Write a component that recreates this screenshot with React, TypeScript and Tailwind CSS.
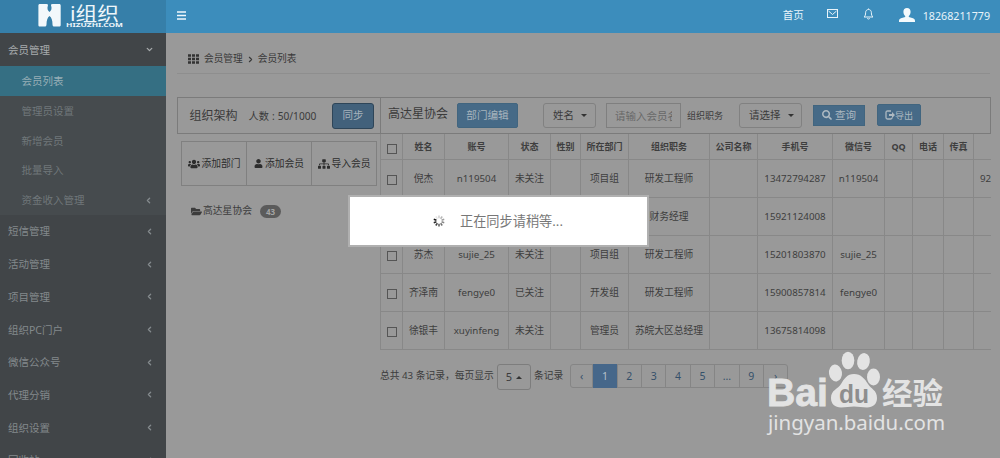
import { ChevronDown, ChevronLeft, ChevronRight } from "lucide-react"
import { FaSitemap, FaUser, FaUsers, FaFolderOpen, FaSearch } from "react-icons/fa"
import { clsx } from "clsx"

const subMenu = [
  { label: "会员列表", active: true },
  { label: "管理员设置" },
  { label: "新增会员" },
  { label: "批量导入" },
  { label: "资金收入管理", more: true },
]

const menu = ["短信管理", "活动管理", "项目管理", "组织PC门户", "微信公众号", "代理分销", "组织设置", "回收站"]

const columns = [
  { title: "", width: 22 },
  { title: "姓名", width: 42 },
  { title: "账号", width: 64 },
  { title: "状态", width: 42 },
  { title: "性别", width: 30 },
  { title: "所在部门", width: 48 },
  { title: "组织职务", width: 81 },
  { title: "公司名称", width: 48 },
  { title: "手机号", width: 75 },
  { title: "微信号", width: 52 },
  { title: "QQ", width: 28 },
  { title: "电话", width: 31 },
  { title: "传真", width: 30 },
  { title: "", width: 80 },
]

const members = [
  ["倪杰", "n119504", "未关注", "", "项目组", "研发工程师", "", "13472794287", "n119504", "", "", "", "92"],
  ["", "", "", "", "", "财务经理", "", "15921124008", "", "", "", "", ""],
  ["苏杰", "sujie_25", "未关注", "", "项目组", "研发工程师", "", "15201803870", "sujie_25", "", "", "", ""],
  ["齐泽南", "fengye0", "已关注", "", "开发组", "研发工程师", "", "15900857814", "fengye0", "", "", "", ""],
  ["徐银丰", "xuyinfeng", "未关注", "", "管理员", "苏皖大区总经理", "", "13675814098", "", "", "", "", ""],
]

const pages = ["‹", "1", "2", "3", "4", "5", "...", "9", "›"]

function Logo() {
  return (
    <svg width="166" height="33" viewBox="0 0 166 33" className="block">
      <path
        d="M40 4H46.500C48 4 48.300 4.800 47.800 6C47 8.500 47.600 10.500 49.500 12C51.400 10.500 52 8.500 51.200 6C50.700 4.800 51 4 52.500 4H59C60.300 4 60.700 4.600 60.700 5.500V25C60.700 26 60 26.600 59 26.600H54.500C53 26.600 52.500 25.800 52.500 24.500C52.500 20 51.500 17.500 49.500 16C47.500 17.500 46.500 20 46.500 24.500C46.500 25.800 46 26.600 44.500 26.600H40C38.900 26.600 38.400 26 38.400 25V5.500C38.400 4.500 39 4 40 4Z"
        fill="#f3f8fb"
      />
      <g fill="#eef6fa">
        <text x="70" y="20.500" fontSize="19" textLength="49" lengthAdjust="spacingAndGlyphs">i组织</text>
        <text x="66" y="27.200" fontSize="5" fontWeight="700" textLength="57" lengthAdjust="spacingAndGlyphs">HIZUZHI.COM</text>
      </g>
    </svg>
  )
}

function TopBar() {
  return (
    <header className="flex h-[33px] shrink-0 bg-[#3c8dbc] text-[#e8f4fa]">
      <div className="w-[166px] shrink-0 bg-[#367fa9]">
        <Logo />
      </div>
      <svg width="9" height="9" viewBox="0 0 9 9" className="mt-[11px] ml-[11px]">
        <path d="M0 1h9M0 4.500h9M0 8h9" stroke="#f0f8fc" strokeWidth="1.700" />
      </svg>
      <div className="ml-auto flex h-[31px] items-center pr-[10px] text-[10.500px]">
        <span className="mr-[22px] pt-px">首页</span>
        <svg width="12" height="10" viewBox="0 0 12 10" className="mr-[25px] mb-[4px]" fill="none" stroke="currentColor">
          <rect x="1.500" y=".5" width="10" height="8" />
          <path d="M2.500 2l4 3.500 4-3.500" />
        </svg>
        <svg width="11" height="12" viewBox="0 0 11 12" className="mr-[25px] mb-[4px]" fill="none" stroke="currentColor">
          <path d="M5.500.5v1M1 9c1.300-1 1.600-2.500 1.600-4.300 0-2 1.200-3.200 2.900-3.200s2.900 1.200 2.900 3.200C8.400 6.500 8.700 8 10 9z" />
          <path d="M4.300 10.200c.2 1.100 2.200 1.100 2.400 0" />
        </svg>
        <svg width="16" height="14" viewBox="0 0 16 14" className="mr-[8px] mb-[2px]" fill="#f4fafc">
          <path d="M8 0C5.700 0 4.400 1.500 4.400 3.700c0 1.700.7 3.300 1.800 4.200v1L2 10.300C.7 10.800 0 11.600 0 13v1h16v-1c0-1.400-.7-2.200-2-2.700L9.800 8.900v-1c1.100-.9 1.800-2.500 1.800-4.200C11.600 1.500 10.300 0 8 0z" />
        </svg>
        <span className="pt-px text-[10.700px]">18268211779</span>
      </div>
    </header>
  )
}

function Sidebar() {
  return (
    <aside className="flex w-[166px] shrink-0 flex-col overflow-hidden bg-[#414548] text-[10.500px] text-[#83898c]">
      <div className="flex h-[33px] shrink-0 items-center justify-between pt-[2px] pr-3 pl-2 text-[#a7abad]">
        会员管理
        <ChevronDown size={9} strokeWidth={3.5} className="mb-[2px]" />
      </div>
      {subMenu.map((item) => (
        <div
          key={item.label}
          className={clsx(
            "flex h-[29.800px] shrink-0 items-center justify-between pt-[2px] pr-[13px] pl-[21.500px]",
            item.active ? "bg-[#356f83] text-[#97aeb6]" : "bg-[#464b4e] text-[#70777a]"
          )}
        >
          {item.label}
          {item.more && <ChevronLeft size={9} strokeWidth={3.500} className="mb-[2px] text-[#858b8e]" />}
        </div>
      ))}
      {menu.map((label) => (
        <div key={label} className="flex h-[32.700px] shrink-0 items-center justify-between pt-[2px] pr-3 pl-2">
          {label}
          <ChevronLeft size={9} strokeWidth={3.500} className="mb-[2px] text-[#858b8e]" />
        </div>
      ))}
    </aside>
  )
}

function Caret({ up }: { up?: boolean }) {
  return (
    <svg width="6" height="3" viewBox="0 0 6 3" fill="#333">
      <path d={up ? "M0 3h6L3 0z" : "M0 0h6L3 3z"} />
    </svg>
  )
}

function Toolbar() {
  return (
    <div className="flex h-[37.500px] w-[814px] border border-[#7b7b7b] text-[#3b3b3b]">
      <div className="flex w-[203px] items-center border-r border-[#7b7b7b] pl-[11.500px]">
        <span className="pt-[2px] text-[12px]">组织架构</span>
        <span className="ml-[11px] pt-[2px] text-[10.200px]">
          人数<span className="mx-[3px]">:</span>50/1000
        </span>
        <button className="mt-px ml-auto mr-[6px] h-[26px] w-[42px] rounded-[3px] border border-[#2e4558] bg-[#42617b] pt-px text-[10.500px] text-[#a6b2bc]">
          同步
        </button>
      </div>
      <div className="flex flex-1 items-center pl-[7px] whitespace-nowrap">
        <span className="mb-[2px] text-[12px]">高达星协会</span>
        <button className="ml-[9px] h-[25px] w-[61px] rounded-[2px] border border-[#41657f] bg-[#466a87] pt-px text-[10.600px] text-[#a7b4bd]">
          部门编辑
        </button>
        <div className="ml-[25px] flex h-[25px] w-[53px] items-center gap-[7px] rounded-[3px] border border-[#818181] pt-px pl-[9px] text-[10.500px]">
          姓名 <Caret />
        </div>
        <div className="ml-[10px] h-[25px] w-[75px] border border-[#7f7f7f] px-[8px]">
          <div className="overflow-hidden text-[10.500px] leading-[25px] text-[#686868]">请输入会员名</div>
        </div>
        <span className="ml-[6px] pt-px text-[9px]">组织职务</span>
        <div className="ml-[16px] flex h-[25px] w-[63px] items-center gap-[7px] rounded-[3px] border border-[#818181] pt-px pl-[9px] text-[10.500px]">
          请选择 <Caret />
        </div>
        <button className="ml-[11px] flex h-[21px] w-[52px] items-center justify-center gap-[3px] border border-[#41657f] bg-[#466a87] text-[10.500px] text-[#adb9c1]">
          <FaSearch size={10} />
          <span className="pt-[2px]">查询</span>
        </button>
        <button className="ml-[12px] flex h-[22px] w-[44px] items-center justify-center rounded-[2px] border border-[#41657f] bg-[#466a87] text-[9px] text-[#adb9c1]">
          <svg width="10" height="10" viewBox="0 0 10 10" fill="none" stroke="currentColor" strokeWidth="1.300">
            <path d="M6 1H2.500C1.500 1 1 1.500 1 2.500v5C1 8.500 1.500 9 2.500 9h3C6.500 9 7 8.500 7 7.500" />
            <path d="M4 4h3V2l3 3-3 3V6H4z" fill="currentColor" stroke="none" />
          </svg>
          导出
        </button>
      </div>
    </div>
  )
}

function OrgPanel() {
  const actions = [
    { icon: FaUsers, label: "添加部门" },
    { icon: FaUser, label: "添加会员" },
    { icon: FaSitemap, label: "导入会员" },
  ]
  return (
    <div className="w-[203px] shrink-0 pt-[7px] pl-1">
      <div className="flex h-[45px] w-[196px] border border-[#808080]">
        {actions.map(({ icon: Icon, label }, i) => (
          <div
            key={label}
            className={clsx(
              "flex flex-1 items-center justify-center gap-[2px] text-[9.750px] text-[#2d2d2d]",
              i > 0 && "border-l border-[#808080]"
            )}
          >
            <Icon size={i === 1 ? 9 : 12} />
            <span className="pt-px">{label}</span>
          </div>
        ))}
      </div>
      <div className="mt-[18px] flex items-center pl-[10px] text-[9.800px] text-[#3c3c3c]">
        <FaFolderOpen size={11} className="mr-px" />
        高达星协会
        <span className="ml-2 h-[13px] w-[21px] rounded-full bg-[#5b5b5b] text-center text-[8px] leading-[13px] font-bold text-[#a5a5a5]">43</span>
      </div>
    </div>
  )
}

function Checkbox() {
  return <span className="mt-[3px] inline-block size-[10px] border border-[#555] align-middle" />
}

function MemberTable() {
  return (
    <div className="w-[610.500px] overflow-hidden">
      <table className="w-[673px] table-fixed border-collapse text-center text-[9.750px] whitespace-nowrap text-[#3e3e3e]">
        <colgroup>
          {columns.map((col, i) => (
            <col key={i} style={{ width: col.width }} />
          ))}
        </colgroup>
        <thead>
          <tr className="h-[25.500px]">
            {columns.map((col, i) => (
              <th key={i} className="border border-t-0 border-[#888] p-0 text-[9px] font-bold">
                {i === 0 ? <Checkbox /> : col.title}
              </th>
            ))}
          </tr>
        </thead>
        <tbody>
          {members.map((row, i) => (
            <tr key={i} className="h-[38px]">
              <td className="border border-[#888] p-0">
                <Checkbox />
              </td>
              {row.map((cell, j) => (
                <td key={j} className={clsx("border border-[#888] p-0 pt-[2px]", j === 12 && "pl-[6px] text-left")}>
                  {cell}
                </td>
              ))}
            </tr>
          ))}
        </tbody>
      </table>
    </div>
  )
}

function Pagination() {
  return (
    <div className="mt-[14px] ml-[203px] flex items-start text-[9.750px] text-[#3c3c3c]">
      <span className="w-[117px] pt-[5px] whitespace-nowrap">总共 43 条记录，每页显示</span>
      <div className="flex h-[26px] w-[34px] items-center justify-center gap-[4px] rounded-[3px] border border-[#7d7d7d] text-[11px]">
        5 <Caret up />
      </div>
      <span className="ml-[3px] pt-[5px]">条记录</span>
      <div className="ml-[7px] flex h-[24px] rounded-[3px] border border-[#858585] text-[10.500px] text-[#35506a]">
        {pages.map((page, i) => (
          <span
            key={page}
            className={clsx(
              "-my-px flex items-center justify-center pt-px",
              i === 0 ? "w-[21px]" : "w-[24.400px] border-l border-[#858585]",
              page === "1" && "bg-[#46678a] text-[#b5c0ca]"
            )}
          >
            {page}
          </span>
        ))}
      </div>
    </div>
  )
}

function Spinner() {
  const spokes = [0, 1, 2, 3, 4, 5, 6, 7, 8, 9]
  return (
    <svg width="12" height="12" viewBox="0 0 12 12">
      {spokes.map((n) => (
        <path
          key={n}
          d="M6 .5v2.800"
          stroke="#111"
          strokeWidth="1.500"
          opacity={1 - n * 0.1}
          transform={`rotate(${288 - n * 36} 6 6)`}
        />
      ))}
    </svg>
  )
}

function SyncDialog() {
  return (
    <div className="absolute top-[195px] left-[348px] flex h-[52px] w-[301px] items-center border-2 border-[#b0b0b0] bg-white pl-[83px] text-[13.200px] text-[#777]">
      <Spinner />
      <span className="ml-[15px] pt-[2px]">正在同步请稍等...</span>
    </div>
  )
}

function Watermark() {
  return (
    <svg width="190" height="90" viewBox="0 0 190 90" className="absolute top-[348px] left-[764px]">
      <g fill="#e3e3e3">
        <text x="3" y="58" fontSize="39" fontWeight="700" fontFamily="Liberation Sans" stroke="#e3e3e3" strokeWidth=".8" textLength="61" lengthAdjust="spacingAndGlyphs">Bai</text>
        <ellipse cx="71.500" cy="25" rx="6.500" ry="8.500" transform="rotate(-8 71.500 25)" />
        <ellipse cx="84" cy="12.500" rx="6.300" ry="8.800" />
        <ellipse cx="99.500" cy="13.500" rx="6.300" ry="8.500" transform="rotate(10 99.500 13.500)" />
        <ellipse cx="109.500" cy="29" rx="6.500" ry="8.500" />
        <path d="M90 26c7 0 11 5 14 10 3 5 9 6 9 14 0 6-4 9.500-10 9.500-5 0-8-1-13-1s-8 1-13 1c-6 0-10-3.500-10-9.500 0-8 7-9 10-14 3-5 6-10 13-10z" />
        <text x="118" y="55.500" fontSize="30" fontWeight="700" textLength="61" lengthAdjust="spacingAndGlyphs">经验</text>
        <text x="4" y="82" fontSize="20.500" textLength="177" lengthAdjust="spacingAndGlyphs">jingyan.baidu.com</text>
      </g>
      <text x="75" y="55" fontSize="26" fontWeight="700" fill="#8e8e8e" fontFamily="Liberation Sans" textLength="30" lengthAdjust="spacingAndGlyphs">du</text>
    </svg>
  )
}

export default function App() {
  return (
    <div className="relative flex h-[458px] w-[1000px] flex-col overflow-hidden bg-[#999] font-['Noto_Sans','Noto_Sans_CJK_SC',sans-serif]">
      <TopBar />
      <div className="flex min-h-0 flex-1">
        <Sidebar />
        <main className="min-w-0 flex-1 pl-[11px]">
          <div className="flex h-[41px] w-[813px] items-center border-b border-[#8e8e8e] pt-[12px] pl-[11px] text-[9.700px] text-[#383838]">
            <svg width="11" height="10" viewBox="0 0 11 10" className="mr-[5px]">
              <path d="M0 1.500h11M0 5h11M0 8.500h11" stroke="#333" strokeWidth="2.500" strokeDasharray="3 1" />
            </svg>
            会员管理
            <ChevronRight size={9} strokeWidth={3} className="mx-[3px]" />
            会员列表
          </div>
          <div className="mt-[22.500px]">
            <Toolbar />
            <div className="flex">
              <OrgPanel />
              <MemberTable />
            </div>
          </div>
          <Pagination />
        </main>
      </div>
      <SyncDialog />
      <Watermark />
    </div>
  )
}
